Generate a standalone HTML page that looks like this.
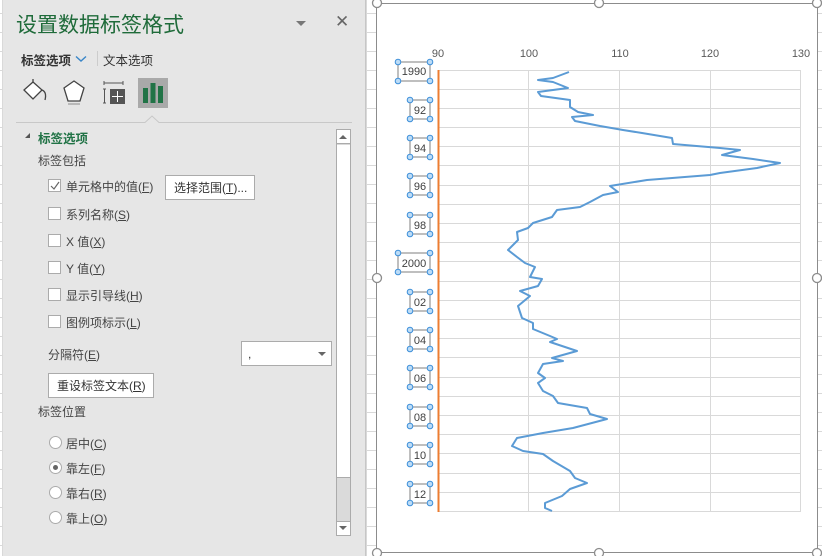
<!DOCTYPE html>
<html><head><meta charset="utf-8"><style>
*{margin:0;padding:0;box-sizing:border-box}
body{width:822px;height:556px;overflow:hidden;background:#fff;position:relative;font-family:"Liberation Sans","Noto Sans CJK SC",sans-serif;font-size:12px;color:#444}
.a{position:absolute;white-space:nowrap}
.cb{position:absolute;width:13px;height:13px;background:#fff;border:1px solid #ababab}
.rd{position:absolute;width:13px;height:13px;border-radius:50%;background:#fff;border:1px solid #ababab}
u{text-decoration:underline}
</style></head><body>
<svg class="a" style="left:0;top:0" width="822" height="556">
<g stroke="#d9d9d9" stroke-width="1">
<line x1="0" y1="13.5" x2="822" y2="13.5"/><line x1="0" y1="32.5" x2="822" y2="32.5"/><line x1="0" y1="51.5" x2="822" y2="51.5"/><line x1="0" y1="70.5" x2="822" y2="70.5"/><line x1="0" y1="89.5" x2="822" y2="89.5"/><line x1="0" y1="108.5" x2="822" y2="108.5"/><line x1="0" y1="127.5" x2="822" y2="127.5"/><line x1="0" y1="146.5" x2="822" y2="146.5"/><line x1="0" y1="165.5" x2="822" y2="165.5"/><line x1="0" y1="184.5" x2="822" y2="184.5"/><line x1="0" y1="203.5" x2="822" y2="203.5"/><line x1="0" y1="222.5" x2="822" y2="222.5"/><line x1="0" y1="241.5" x2="822" y2="241.5"/><line x1="0" y1="260.5" x2="822" y2="260.5"/><line x1="0" y1="279.5" x2="822" y2="279.5"/><line x1="0" y1="298.5" x2="822" y2="298.5"/><line x1="0" y1="317.5" x2="822" y2="317.5"/><line x1="0" y1="336.5" x2="822" y2="336.5"/><line x1="0" y1="355.5" x2="822" y2="355.5"/><line x1="0" y1="374.5" x2="822" y2="374.5"/><line x1="0" y1="393.5" x2="822" y2="393.5"/><line x1="0" y1="412.5" x2="822" y2="412.5"/><line x1="0" y1="431.5" x2="822" y2="431.5"/><line x1="0" y1="450.5" x2="822" y2="450.5"/><line x1="0" y1="469.5" x2="822" y2="469.5"/><line x1="0" y1="488.5" x2="822" y2="488.5"/><line x1="0" y1="507.5" x2="822" y2="507.5"/><line x1="0" y1="526.5" x2="822" y2="526.5"/><line x1="0" y1="545.5" x2="822" y2="545.5"/>
<line x1="366.5" y1="0" x2="366.5" y2="556"/><line x1="2.5" y1="0" x2="2.5" y2="556"/>
</g>
</svg>
<!-- panel -->
<div class="a" style="left:3px;top:0;width:363px;height:556px;background:#e6e6e6;border-right:1px solid #c6c6c6"></div>
<div class="a" style="left:16px;top:9px;font-size:21px;color:#1f6b3a">设置数据标签格式</div>
<div class="a" style="left:296px;top:21px;width:0;height:0;border-left:5px solid transparent;border-right:5px solid transparent;border-top:5px solid #777"></div>
<div class="a" style="left:335px;top:12px;font-size:17px;color:#666">✕</div>
<div class="a" style="left:21px;top:50px;font-size:12.5px;color:#333;font-weight:bold">标签选项</div>
<svg class="a" style="left:75px;top:55px" width="12" height="8"><path d="M1 1.5 L6 6 L11 1.5" stroke="#3a86c8" stroke-width="1.4" fill="none"/></svg>
<div class="a" style="left:97px;top:51px;width:1px;height:15px;background:#ccc"></div>
<div class="a" style="left:103px;top:50px;font-size:12.5px;color:#333">文本选项</div>
<!-- icons -->
<svg class="a" style="left:20px;top:78px" width="30" height="30"><path d="M4 12 L13 4 L22 12 L13 21 Z" fill="#fff" stroke="#444" stroke-width="1.3"/><path d="M13 4 L13 1 M22 12 Q27 14 25 22" stroke="#444" stroke-width="1.3" fill="none"/></svg>
<svg class="a" style="left:62px;top:79px" width="24" height="28"><path d="M12 2 L22 9 L18 22 L6 22 L2 9 Z" fill="#fff" stroke="#444" stroke-width="1.3"/><path d="M6 25 L18 25" stroke="#aaa" stroke-width="1.5"/></svg>
<svg class="a" style="left:101px;top:81px" width="26" height="26"><path d="M3 2 L22 2 M3 0 L3 4 M22 0 L22 4 M2 8 L5 8 M3.5 8 L3.5 22 M2 22 L5 22" stroke="#555" stroke-width="1"/><rect x="9" y="8" width="15" height="15" fill="#555"/><path d="M16.5 10 L16.5 21 M11 15.5 L22 15.5" stroke="#fff" stroke-width="1"/></svg>
<div class="a" style="left:138px;top:78px;width:30px;height:30px;background:#a9a9a9"></div>
<svg class="a" style="left:138px;top:78px" width="30" height="30"><rect x="5" y="10" width="5" height="15" fill="#217346"/><rect x="12.5" y="5" width="5" height="20" fill="#217346"/><rect x="20" y="8" width="5" height="17" fill="#217346"/></svg>
<svg class="a" style="left:16px;top:114px" width="340" height="10"><path d="M0 8.5 L129 8.5 L136 2 L143 8.5 L336 8.5" stroke="#c8c8c8" fill="none"/></svg>
<!-- section -->
<svg class="a" style="left:24px;top:132px" width="8" height="8"><path d="M6 1 L6 6 L1 6 Z" fill="#555"/></svg>
<div class="a" style="left:38px;top:128px;font-size:12.5px;color:#217346;font-weight:bold">标签选项</div>
<div class="a" style="left:38px;top:152px">标签包括</div>
<div class="cb" style="left:48px;top:179px"></div>
<svg class="a" style="left:49px;top:180px" width="12" height="12"><path d="M2 6 L5 9 L10 2" stroke="#666" stroke-width="1.2" fill="none"/></svg>
<div class="a" style="left:66px;top:178px">单元格中的值(<u>F</u>)</div>
<div class="a" style="left:165px;top:175px;width:90px;height:25px;background:#fff;border:1px solid #ababab;padding:3px 0 0 8px;color:#333">选择范围(<u>T</u>)...</div>
<div class="cb" style="left:48px;top:207px"></div><div class="a" style="left:66px;top:206px">系列名称(<u>S</u>)</div>
<div class="cb" style="left:48px;top:234px"></div><div class="a" style="left:66px;top:233px">X 值(<u>X</u>)</div>
<div class="cb" style="left:48px;top:261px"></div><div class="a" style="left:66px;top:260px">Y 值(<u>Y</u>)</div>
<div class="cb" style="left:48px;top:288px"></div><div class="a" style="left:66px;top:287px">显示引导线(<u>H</u>)</div>
<div class="cb" style="left:48px;top:315px"></div><div class="a" style="left:66px;top:314px">图例项标示(<u>L</u>)</div>
<div class="a" style="left:48px;top:346px">分隔符(<u>E</u>)</div>
<div class="a" style="left:241px;top:341px;width:91px;height:25px;background:#fff;border:1px solid #ababab"></div>
<div class="a" style="left:248px;top:347px;color:#333">,</div>
<div class="a" style="left:318px;top:352px;width:0;height:0;border-left:4px solid transparent;border-right:4px solid transparent;border-top:4px solid #666"></div>
<div class="a" style="left:48px;top:373px;width:106px;height:25px;background:#fff;border:1px solid #ababab;padding:3px 0 0 8px;color:#333">重设标签文本(<u>R</u>)</div>
<div class="a" style="left:38px;top:403px">标签位置</div>
<div class="rd" style="left:49px;top:436px"></div><div class="a" style="left:66px;top:435px">居中(<u>C</u>)</div>
<div class="rd" style="left:49px;top:461px"></div><div class="a" style="left:53px;top:465px;width:5px;height:5px;border-radius:50%;background:#666"></div><div class="a" style="left:66px;top:460px">靠左(<u>F</u>)</div>
<div class="rd" style="left:49px;top:486px"></div><div class="a" style="left:66px;top:485px">靠右(<u>R</u>)</div>
<div class="rd" style="left:49px;top:511px"></div><div class="a" style="left:66px;top:510px">靠上(<u>O</u>)</div>
<!-- scrollbar -->
<div class="a" style="left:336px;top:129px;width:15px;height:407px;background:#dadada;border:1px solid #ababab"></div>
<div class="a" style="left:337px;top:130px;width:13px;height:14px;background:#fff;border-bottom:1px solid #ababab"></div>
<div class="a" style="left:339px;top:135px;width:0;height:0;border-left:4px solid transparent;border-right:4px solid transparent;border-bottom:4px solid #666"></div>
<div class="a" style="left:337px;top:145px;width:13px;height:333px;background:#fff;border-bottom:1px solid #ababab"></div>
<div class="a" style="left:337px;top:521px;width:13px;height:14px;background:#fff;border-top:1px solid #ababab"></div>
<div class="a" style="left:339px;top:526px;width:0;height:0;border-left:4px solid transparent;border-right:4px solid transparent;border-top:4px solid #666"></div>
<!-- chart -->
<div class="a" style="left:376px;top:3px;width:442px;height:550px;background:#fff;border:1px solid #8c8c8c"></div>
<svg class="a" style="left:0;top:0" width="822" height="556">
<g stroke="#d9d9d9" stroke-width="1">
<line x1="438" y1="70.5" x2="801" y2="70.5"/><line x1="438" y1="89.5" x2="801" y2="89.5"/><line x1="438" y1="108.5" x2="801" y2="108.5"/><line x1="438" y1="127.5" x2="801" y2="127.5"/><line x1="438" y1="146.5" x2="801" y2="146.5"/><line x1="438" y1="165.5" x2="801" y2="165.5"/><line x1="438" y1="185.5" x2="801" y2="185.5"/><line x1="438" y1="204.5" x2="801" y2="204.5"/><line x1="438" y1="223.5" x2="801" y2="223.5"/><line x1="438" y1="242.5" x2="801" y2="242.5"/><line x1="438" y1="261.5" x2="801" y2="261.5"/><line x1="438" y1="281.5" x2="801" y2="281.5"/><line x1="438" y1="300.5" x2="801" y2="300.5"/><line x1="438" y1="319.5" x2="801" y2="319.5"/><line x1="438" y1="338.5" x2="801" y2="338.5"/><line x1="438" y1="357.5" x2="801" y2="357.5"/><line x1="438" y1="377.5" x2="801" y2="377.5"/><line x1="438" y1="396.5" x2="801" y2="396.5"/><line x1="438" y1="415.5" x2="801" y2="415.5"/><line x1="438" y1="434.5" x2="801" y2="434.5"/><line x1="438" y1="453.5" x2="801" y2="453.5"/><line x1="438" y1="473.5" x2="801" y2="473.5"/><line x1="438" y1="492.5" x2="801" y2="492.5"/><line x1="438" y1="511.5" x2="801" y2="511.5"/>
<line x1="528.5" y1="70" x2="528.5" y2="511"/><line x1="619.5" y1="70" x2="619.5" y2="511"/><line x1="710.5" y1="70" x2="710.5" y2="511"/><line x1="800.5" y1="70" x2="800.5" y2="511"/>
</g>
<g font-family="Liberation Sans" font-size="11" fill="#595959" text-anchor="middle">
<text x="438" y="57">90</text><text x="529" y="57">100</text><text x="620" y="57">110</text><text x="710" y="57">120</text><text x="801" y="57">130</text>
</g>
<line x1="438.5" y1="70" x2="438.5" y2="512" stroke="#ed7d31" stroke-width="2"/>
<polyline fill="none" stroke="#5b9bd5" stroke-width="2" stroke-linejoin="round" points="569,72 553,78 538,80 553,82 568,88 538,92 541,96 570,100 570,107 578,112 593,115 572,117 575,121 600,126 623,130 642,133 672,138 673,144 720,148 740,150 722,155 753,159 780,163 757,168 720,173 710,175 647,180 610,186 618,192 603,195 590,202 580,207 557,210 552,217 533,223 528,228 517,232 518,240 508,250 517,257 525,263 535,267 530,277 542,279 538,286 520,291 530,296 518,306 522,318 533,323 533,329 550,336 557,339 550,342 577,351 552,358 563,361 543,364 538,373 545,378 538,383 543,391 553,396 558,403 587,408 590,414 607,419 573,428 543,433 517,438 512,446 523,451 543,454 553,461 570,471 575,478 587,483 570,489 562,496 545,503 545,508 552,511"/>
<g font-family="Liberation Sans" font-size="11" fill="#404040" text-anchor="middle">
<text x="414" y="75">1990</text><text x="420" y="114">92</text><text x="420" y="152">94</text><text x="420" y="190">96</text><text x="420" y="229">98</text><text x="414" y="267">2000</text><text x="420" y="306">02</text><text x="420" y="344">04</text><text x="420" y="382">06</text><text x="420" y="421">08</text><text x="420" y="459">10</text><text x="420" y="498">12</text>
</g>
<g fill="none" stroke="#7f7f7f" stroke-width="1">
<rect x="398" y="62" width="32" height="19"/><rect x="410" y="100" width="20" height="19"/><rect x="410" y="138" width="20" height="19"/><rect x="410" y="176" width="20" height="19"/><rect x="410" y="215" width="20" height="19"/><rect x="398" y="253" width="32" height="19"/><rect x="410" y="292" width="20" height="19"/><rect x="410" y="330" width="20" height="19"/><rect x="410" y="368" width="20" height="19"/><rect x="410" y="407" width="20" height="19"/><rect x="410" y="445" width="20" height="19"/><rect x="410" y="484" width="20" height="19"/>
</g>
<g fill="#bcdcf7" stroke="#3c8ed8" stroke-width="1">
<circle cx="398" cy="62" r="2.8"/><circle cx="430" cy="62" r="2.8"/><circle cx="398" cy="81" r="2.8"/><circle cx="430" cy="81" r="2.8"/>
<circle cx="398" cy="253" r="2.8"/><circle cx="430" cy="253" r="2.8"/><circle cx="398" cy="272" r="2.8"/><circle cx="430" cy="272" r="2.8"/>
<circle cx="410" cy="100" r="2.8"/><circle cx="430" cy="100" r="2.8"/><circle cx="410" cy="119" r="2.8"/><circle cx="430" cy="119" r="2.8"/>
<circle cx="410" cy="138" r="2.8"/><circle cx="430" cy="138" r="2.8"/><circle cx="410" cy="157" r="2.8"/><circle cx="430" cy="157" r="2.8"/>
<circle cx="410" cy="176" r="2.8"/><circle cx="430" cy="176" r="2.8"/><circle cx="410" cy="195" r="2.8"/><circle cx="430" cy="195" r="2.8"/>
<circle cx="410" cy="215" r="2.8"/><circle cx="430" cy="215" r="2.8"/><circle cx="410" cy="234" r="2.8"/><circle cx="430" cy="234" r="2.8"/>
<circle cx="410" cy="292" r="2.8"/><circle cx="430" cy="292" r="2.8"/><circle cx="410" cy="311" r="2.8"/><circle cx="430" cy="311" r="2.8"/>
<circle cx="410" cy="330" r="2.8"/><circle cx="430" cy="330" r="2.8"/><circle cx="410" cy="349" r="2.8"/><circle cx="430" cy="349" r="2.8"/>
<circle cx="410" cy="368" r="2.8"/><circle cx="430" cy="368" r="2.8"/><circle cx="410" cy="387" r="2.8"/><circle cx="430" cy="387" r="2.8"/>
<circle cx="410" cy="407" r="2.8"/><circle cx="430" cy="407" r="2.8"/><circle cx="410" cy="426" r="2.8"/><circle cx="430" cy="426" r="2.8"/>
<circle cx="410" cy="445" r="2.8"/><circle cx="430" cy="445" r="2.8"/><circle cx="410" cy="464" r="2.8"/><circle cx="430" cy="464" r="2.8"/>
<circle cx="410" cy="484" r="2.8"/><circle cx="430" cy="484" r="2.8"/><circle cx="410" cy="503" r="2.8"/><circle cx="430" cy="503" r="2.8"/>
</g>
<g fill="#fff" stroke="#8c8c8c" stroke-width="1.3">
<circle cx="377" cy="3" r="4.5"/><circle cx="599" cy="3" r="4.5"/><circle cx="817" cy="3" r="4.5"/>
<circle cx="377" cy="278" r="4.5"/><circle cx="817" cy="278" r="4.5"/>
<circle cx="377" cy="553" r="4.5"/><circle cx="599" cy="553" r="4.5"/><circle cx="817" cy="553" r="4.5"/>
</g>
</svg>
</body></html>
